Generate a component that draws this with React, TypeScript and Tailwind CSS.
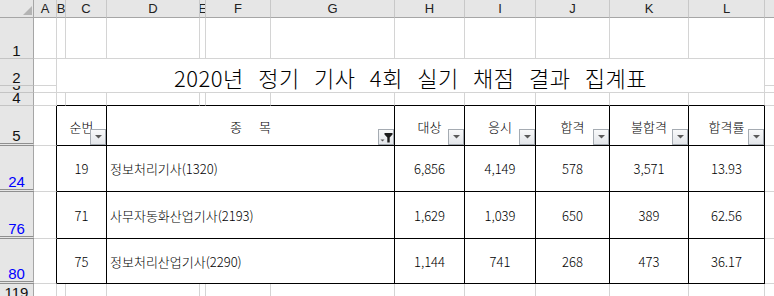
import React from "react";

const KR = "font-['Noto_Sans_CJK_KR','Noto_Sans_CJK_SC',sans-serif] font-light";
const UI = "font-['Liberation_Sans',Arial,sans-serif]";

const GRID = "box-border border-r border-b border-r-[#d4d4d4] border-b-[#d4d4d4]";
const GRID_LAST = "box-border border-b border-b-[#d4d4d4]";
const LEFT_OF_TABLE = "box-border border-r border-b border-r-black border-b-[#d4d4d4]";
const ABOVE_TABLE = "box-border border-r border-b border-r-[#d4d4d4] border-b-black";
const TCELL = "box-border relative flex items-center border-r border-b border-r-black border-b-black bg-white";

const letters = ["A", "B", "C", "D", "E", "F", "G", "H", "I", "J", "K", "L"];
const heads = ["대상", "응시", "합격", "불합격", "합격률"];

const rows = [
  { row: "24", no: "19", name: "정보처리기사(1320)", vals: ["6,856", "4,149", "578", "3,571", "13.93"] },
  { row: "76", no: "71", name: "사무자동화산업기사(2193)", vals: ["1,629", "1,039", "650", "389", "62.56"] },
  { row: "80", no: "75", name: "정보처리산업기사(2290)", vals: ["1,144", "741", "268", "473", "36.17"] },
];

function RowHead({ label, blue, hidden }: { label: string; blue?: boolean; hidden?: boolean }) {
  return (
    <div
      className={`box-border flex items-end justify-center overflow-hidden border-r border-r-[#a6a6a6] bg-[#e6e6e6] text-[15px] leading-none ${UI} ${
        hidden ? "border-b-[3px] border-double border-b-[#8f8f8f]" : "border-b border-b-[#c4c4c4]"
      } ${blue ? "text-[#0000ff]" : "text-[#111]"}`}
    >
      {label}
    </div>
  );
}

function ColHead({ label, last }: { label: string; last?: boolean }) {
  return (
    <div
      className={`box-border flex items-end justify-center overflow-hidden border-b border-b-[#a6a6a6] bg-[#e6e6e6] pb-[2px] text-[13px] leading-none text-[#222] ${UI} ${
        last ? "" : "border-r border-r-[#c8c8c8]"
      }`}
    >
      {label}
    </div>
  );
}

function DropBtn({ filtered }: { filtered?: boolean }) {
  return (
    <span className="absolute right-0 bottom-0 box-border flex h-4 w-4 items-center justify-center border border-[#a5abb2] bg-linear-to-b from-[#f8f9fa] to-[#e3e6ea]">
      {filtered ? (
        <svg width="14" height="14" viewBox="0 0 14 14">
          <path d="M1.5 9.5h4l-2 2z" fill="#555" />
          <path d="M5.5 3h8v1.5l-2.8 3V12.5H8.3V7.5L5.5 4.5z" fill="#1c1c1c" />
        </svg>
      ) : (
        <svg width="7" height="4" viewBox="0 0 7 4">
          <path d="M0 0h7L3.5 3.5z" fill="#5a5a5a" />
        </svg>
      )}
    </span>
  );
}

export default function App() {
  return (
    <div className="h-[296px] w-[774px] overflow-hidden bg-white">
      <div className="grid h-[301px] grid-cols-[34px_23px_9px_41px_93px_6px_65px_124px_70px_71px_74px_79px_76px_9px] grid-rows-[18px_41px_27px_7px_13px_40px_46px_47px_45px_17px]">
        {/* column headers */}
        <div className="relative box-border border-r border-b border-r-[#a6a6a6] border-b-[#a6a6a6] bg-[#e6e6e6]">
          <svg className="absolute right-[1px] bottom-[2px]" width="9" height="9" viewBox="0 0 9 9">
            <path d="M9 0v9H0z" fill="#b4b4b4" />
          </svg>
        </div>
        {letters.map((l) => (
          <ColHead key={l} label={l} />
        ))}
        <ColHead label="" last />

        {/* row 1 */}
        <RowHead label="1" />
        {letters.map((l) => (
          <div key={l} className={GRID} />
        ))}
        <div className={GRID_LAST} />

        {/* rows 2-3: title */}
        <RowHead label="2" />
        <div className={GRID} />
        <div
          className={`col-span-11 row-span-2 box-border flex items-center justify-center border-r border-b border-r-[#d4d4d4] border-b-[#d4d4d4] pt-[3px] text-[22px] leading-none tracking-[0.5px] text-black [word-spacing:9px] ${KR}`}
        >
          2020년 정기 기사 4회 실기 채점 결과 집계표
        </div>
        <div className={GRID_LAST} />
        <RowHead label="3" />
        <div className={GRID} />
        <div className={GRID_LAST} />

        {/* row 4 */}
        <RowHead label="4" />
        <div className={GRID} />
        {letters.slice(1).map((l) => (
          <div key={l} className={ABOVE_TABLE} />
        ))}
        <div className={GRID_LAST} />

        {/* row 5: table header */}
        <RowHead label="5" hidden />
        <div className={LEFT_OF_TABLE} />
        <div className={`col-span-2 justify-center pt-[2px] text-[13px] leading-none ${TCELL} ${KR}`}>
          순번
          <DropBtn />
        </div>
        <div className={`col-span-4 justify-center pt-[2px] text-[13px] leading-none [word-spacing:14px] ${TCELL} ${KR}`}>
          종 목
          <DropBtn filtered />
        </div>
        {heads.map((h) => (
          <div key={h} className={`justify-center pt-[2px] text-[13px] leading-none ${TCELL} ${KR}`}>
            {h}
            <DropBtn />
          </div>
        ))}
        <div className={GRID_LAST} />

        {/* data rows */}
        {rows.map((r) => (
          <React.Fragment key={r.row}>
            <RowHead label={r.row} blue hidden />
            <div className={LEFT_OF_TABLE} />
            <div className={`col-span-2 justify-center text-[13px] leading-none ${TCELL} ${KR}`}>{r.no}</div>
            <div className={`col-span-4 pl-[3px] text-[13px] leading-none ${TCELL} ${KR}`}>{r.name}</div>
            {r.vals.map((v, i) => (
              <div key={i} className={`justify-center text-[13px] leading-none ${TCELL} ${KR}`}>
                {v}
              </div>
            ))}
            <div className={GRID_LAST} />
          </React.Fragment>
        ))}

        {/* row 119 */}
        <RowHead label="119" />
        {letters.map((l) => (
          <div key={l} className={GRID} />
        ))}
        <div className={GRID_LAST} />
      </div>
    </div>
  );
}
